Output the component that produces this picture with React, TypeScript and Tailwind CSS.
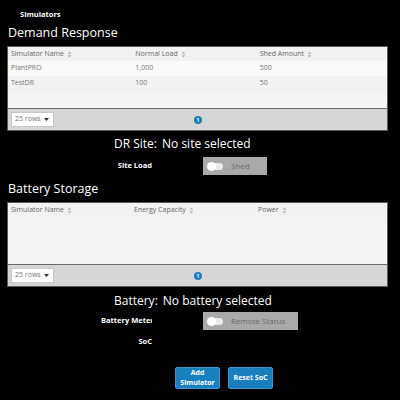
import React from "react";

type Col = { label: string; w: number };

const SortIcon = () => (
  <svg width="5" height="7" viewBox="0 0 5 7" className="ml-[3px] inline-block">
    <path d="M2.5 0.5 L4.5 2.8 L0.5 2.8 Z" fill="#b5b5b5" />
    <path d="M2.5 6.5 L4.5 4.2 L0.5 4.2 Z" fill="#b5b5b5" />
  </svg>
);

const Footer = () => (
  <div className="relative flex h-[22px] items-center border-t border-[#6a6a6a] bg-[#d6d6d6] px-[3px]">
    <div className="flex h-[15px] w-[43px] items-center justify-between border border-[#c8c8c8] bg-white pl-[3px] pr-[4px]">
      <span className="text-[7px] text-[#777]">25 rows</span>
      <svg width="5" height="3" viewBox="0 0 5 3">
        <path d="M0 0 L5 0 L2.5 3 Z" fill="#333" />
      </svg>
    </div>
    <div className="absolute left-[186px] top-[7px] flex h-[8px] w-[8px] items-center justify-center rounded-full bg-[#1a7dc2]">
      <span className="text-[5px] font-bold leading-none text-white">1</span>
    </div>
  </div>
);

const SimTable = ({ cols, rows, bodyH }: { cols: Col[]; rows: string[][]; bodyH: number }) => (
  <div className="mx-[7px] w-[381px] border border-[#5a5a5a]">
    <div className="bg-[#f4f4f4]" style={{ height: bodyH }}>
      <div className="flex h-[14px] items-center bg-[#f2f2f2] px-[3px]">
        {cols.map((c) => (
          <div key={c.label} className="flex items-center text-[7px] text-[#666]" style={{ width: c.w }}>
            {c.label}
            <SortIcon />
          </div>
        ))}
      </div>
      {rows.map((r, i) => (
        <div
          key={i}
          className={`flex h-[15px] items-center px-[3px] ${i % 2 === 0 ? "bg-[#fafafa]" : "bg-[#f2f2f2]"}`}
        >
          {r.map((v, j) => (
            <div key={j} className="text-[7px] text-[#777]" style={{ width: cols[j].w }}>
              {v}
            </div>
          ))}
        </div>
      ))}
    </div>
    <Footer />
  </div>
);

const Toggle = ({ label, w }: { label: string; w: number }) => (
  <div className="flex h-[18px] items-center bg-[#a9a9a9] pl-[5px]" style={{ width: w }}>
    <div className="relative h-[7px] w-[15px] rounded-full bg-[#ececec]">
      <div className="absolute left-[-1px] top-[-1px] h-[9px] w-[9px] rounded-full bg-white" />
    </div>
    <span className="ml-[8px] text-[8px] text-[#6a6a6a]">{label}</span>
  </div>
);

const FieldRow = ({ label, children }: { label: string; children?: React.ReactNode }) => (
  <div className="flex h-[18px] items-center">
    <div className="ml-[101px] w-[51px] overflow-hidden whitespace-nowrap text-right text-[7.5px] font-bold text-white">
      {label}
    </div>
    <div className="ml-[51px]">{children}</div>
  </div>
);

export default function App() {
  return (
    <div className="h-[400px] w-[400px] overflow-hidden bg-black" style={{ fontFamily: '"Open Sans", sans-serif' }}>
      <div className="pl-[20px] pt-[9px] text-[7.5px] font-bold leading-[10px] text-white">Simulators</div>
      <h2 className="mt-[5px] pl-[8px] text-[12.5px] leading-[18px] text-white">Demand Response</h2>
      <div className="mt-[4px]">
        <SimTable
          cols={[
            { label: "Simulator Name", w: 126 },
            { label: "Normal Load", w: 126 },
            { label: "Shed Amount", w: 126 },
          ]}
          rows={[
            ["PlantPRO", "1,000", "500"],
            ["TestDR", "100", "50"],
          ]}
          bodyH={61}
        />
      </div>

      <div className="mt-[5px] flex h-[16px] items-center pl-[114px] text-[12px] text-white">
        <span>DR Site:</span>
        <span className="ml-[5px]">No site selected</span>
      </div>
      <div className="mt-[5px]">
        <FieldRow label="Site Load">
          <Toggle label="Shed" w={64} />
        </FieldRow>
      </div>

      <h2 className="mt-[5px] pl-[8px] text-[12.5px] leading-[18px] text-white">Battery Storage</h2>
      <div className="mt-[4px]">
        <SimTable
          cols={[
            { label: "Simulator Name", w: 123 },
            { label: "Energy Capacity", w: 124 },
            { label: "Power", w: 124 },
          ]}
          rows={[]}
          bodyH={61}
        />
      </div>

      <div className="mt-[6px] flex h-[16px] items-center pl-[114px] text-[12px] text-white">
        <span>Battery:</span>
        <span className="ml-[5px]">No battery selected</span>
      </div>
      <div className="mt-[3px]">
        <FieldRow label="Battery Meter">
          <Toggle label="Remote Status" w={95} />
        </FieldRow>
      </div>
      <div className="mt-[3px]">
        <FieldRow label="SoC" />
      </div>

      <div className="mt-[16px] flex gap-[8px] pl-[175px]">
        <button className="flex h-[22px] w-[45px] items-center justify-center rounded-[2px] border border-[#3d95cf] bg-[#1a7fbf] text-[7px] font-bold leading-[10px] text-white">
          Add
          <br />
          Simulator
        </button>
        <button className="flex h-[22px] w-[45px] items-center justify-center rounded-[2px] border border-[#3d95cf] bg-[#1a7fbf] text-[7px] font-bold leading-[10px] text-white">
          Reset SoC
        </button>
      </div>
    </div>
  );
}
